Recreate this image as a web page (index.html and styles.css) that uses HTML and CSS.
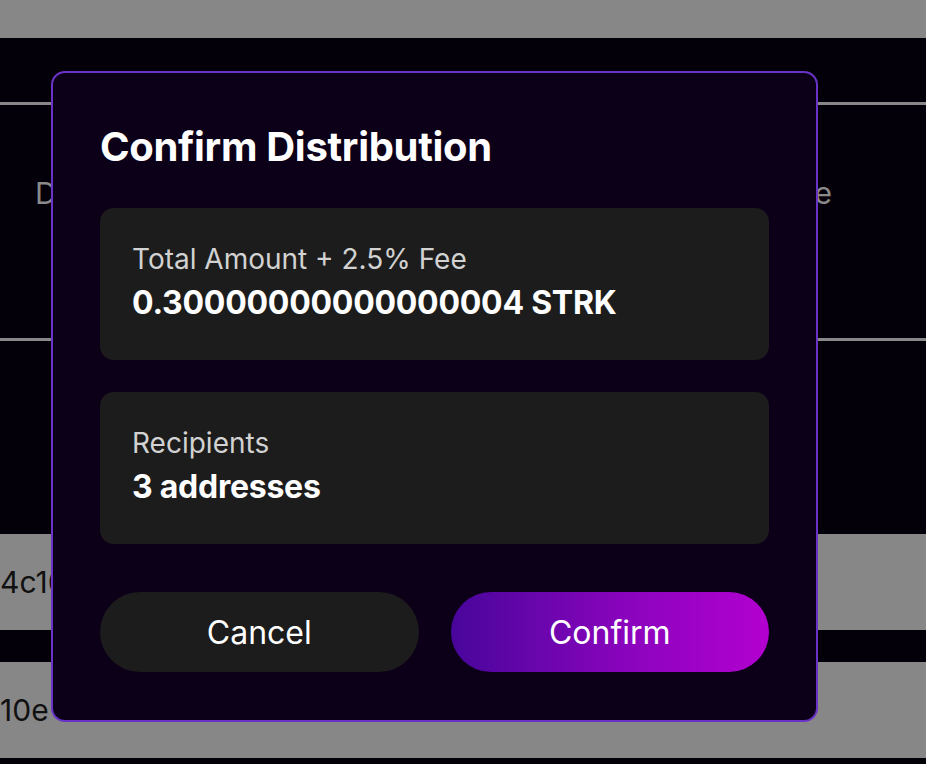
FILE: index.html
```html
<!DOCTYPE html>
<html lang="en">
<head>
<meta charset="utf-8">
<title>Confirm Distribution</title>
<link rel="stylesheet" href="styles.css">
</head>
<body>
<div class="page">
  <div class="topbar"></div>
  <section class="panel">
    <div class="thead">
      <span>Date</span>
      <span>Value</span>
    </div>
    <div class="tbody">
      <div class="row"><span>4c10a7f3e2b9d8</span></div>
      <div class="row"><span>10e  c3b8a1f0d2</span></div>
    </div>
  </section>
</div>

<div class="overlay">
  <div class="modal" role="dialog" aria-labelledby="modal-title">
    <h2 class="modal-title" id="modal-title">Confirm Distribution</h2>
    <div class="info-card">
      <div class="info-label">Total Amount + 2.5% Fee</div>
      <div class="info-value">0.30000000000000004 STRK</div>
    </div>
    <div class="info-card">
      <div class="info-label">Recipients</div>
      <div class="info-value">3 addresses</div>
    </div>
    <div class="actions">
      <button class="btn btn-cancel" type="button">Cancel</button>
      <button class="btn btn-confirm" type="button">Confirm</button>
    </div>
  </div>
</div>
</body>
</html>
```

FILE: styles.css
```css
* { box-sizing: border-box; }

html, body {
  margin: 0;
  padding: 0;
  height: 100%;
  overflow: hidden;
}

body {
  background: #040008;
  font-family: Inter, "Noto Sans", sans-serif;
  color: #ffffff;
}

.page {
  display: flex;
  flex-direction: column;
}

.topbar {
  height: 38px;
  background: #878787;
}

.panel {
  background: #040009;
  padding-top: 64px;
}

.thead {
  height: 239px;
  border-top: 3px solid #888888;
  border-bottom: 3px solid #888888;
  display: flex;
  justify-content: space-between;
  align-items: flex-start;
  padding: 70px 94px 0 35px;
  font-size: 30px;
  line-height: 36px;
  color: #8a8a8a;
}

.tbody {
  padding-top: 193px;
  display: flex;
  flex-direction: column;
  gap: 32px;
}

.row {
  height: 96px;
  background: #878787;
  display: flex;
  align-items: center;
  padding-left: 0;
  font-size: 30px;
  color: #111111;
  white-space: pre;
  overflow: hidden;
}

.overlay {
  position: fixed;
  inset: 0;
  padding: 71px 0 0 51px;
}

.modal {
  width: 767px;
  background: #0c0019;
  border: 2px solid #6a33c8;
  border-radius: 14px;
  padding: 47px 47px 48px;
}

.modal-title {
  margin: 3px 0 37px;
  font-size: 40px;
  line-height: 48px;
  font-weight: 700;
  letter-spacing: -0.3px;
  color: #ffffff;
}

.info-card {
  background: #1c1c1c;
  border-radius: 14px;
  padding: 32px;
  margin-bottom: 32px;
}

.info-card + .info-card {
  margin-bottom: 48px;
}

.info-label {
  font-size: 28px;
  line-height: 38px;
  color: #d2d2d2;
}

.info-value {
  font-size: 32px;
  line-height: 50px;
  font-weight: 700;
  letter-spacing: -0.25px;
  color: #ffffff;
}

.actions {
  display: flex;
  gap: 32px;
}

.btn {
  flex: 1;
  height: 80px;
  border: 0;
  border-radius: 40px;
  font-family: Inter, "Noto Sans", sans-serif;
  font-size: 32px;
  color: #ffffff;
  cursor: pointer;
}

.btn-cancel {
  background: #1c1c1c;
}

.btn-confirm {
  background: linear-gradient(90deg, #48069b 0%, #8a04bd 55%, #b300d0 100%);
}
```
